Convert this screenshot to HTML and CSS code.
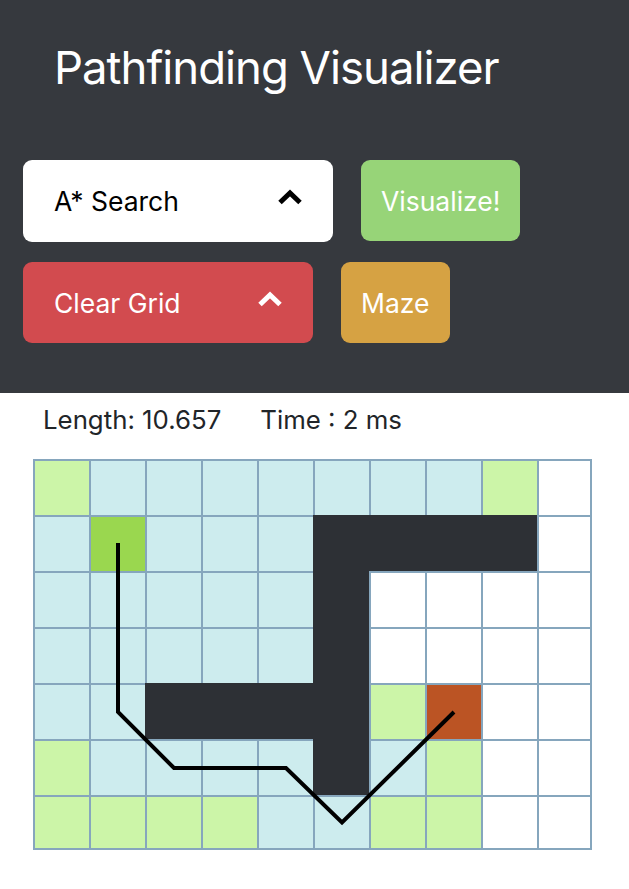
FILE: index.html
```html
<!DOCTYPE html>
<html lang="en">
<head>
<meta charset="utf-8">
<title>Pathfinding Visualizer</title>
<link rel="stylesheet" href="styles.css">
</head>
<body>
<header class="topbar">
  <h1 class="title">Pathfinding Visualizer</h1>
  <div class="controls">
    <div class="controls__row">
      <button class="dropdown dropdown--light" type="button">
        <span class="dropdown__label">A* Search</span>
        <svg class="chevron" viewBox="0 0 26 16" width="26" height="16" aria-hidden="true"><polyline points="3,13.5 13,4 23,13.5" /></svg>
      </button>
      <button class="btn btn--green" type="button">Visualize!</button>
    </div>
    <div class="controls__row">
      <button class="dropdown dropdown--red" type="button">
        <span class="dropdown__label">Clear Grid</span>
        <svg class="chevron" viewBox="0 0 26 16" width="26" height="16" aria-hidden="true"><polyline points="3,13.5 13,4 23,13.5" /></svg>
      </button>
      <button class="btn btn--orange" type="button">Maze</button>
    </div>
  </div>
</header>
<main class="content">
  <div class="stats">
    <span class="stats__item">Length: 10.657</span>
    <span class="stats__item">Time : 2 ms</span>
  </div>
  <div class="board">
    <div class="grid">
      <div class="cell cell--frontier"></div><div class="cell cell--visited"></div><div class="cell cell--visited"></div><div class="cell cell--visited"></div><div class="cell cell--visited"></div><div class="cell cell--visited"></div><div class="cell cell--visited"></div><div class="cell cell--visited"></div><div class="cell cell--frontier"></div><div class="cell"></div>
      <div class="cell cell--visited"></div><div class="cell cell--start"></div><div class="cell cell--visited"></div><div class="cell cell--visited"></div><div class="cell cell--visited"></div><div class="cell cell--wall"></div><div class="cell cell--wall"></div><div class="cell cell--wall"></div><div class="cell cell--wall"></div><div class="cell"></div>
      <div class="cell cell--visited"></div><div class="cell cell--visited"></div><div class="cell cell--visited"></div><div class="cell cell--visited"></div><div class="cell cell--visited"></div><div class="cell cell--wall"></div><div class="cell"></div><div class="cell"></div><div class="cell"></div><div class="cell"></div>
      <div class="cell cell--visited"></div><div class="cell cell--visited"></div><div class="cell cell--visited"></div><div class="cell cell--visited"></div><div class="cell cell--visited"></div><div class="cell cell--wall"></div><div class="cell"></div><div class="cell"></div><div class="cell"></div><div class="cell"></div>
      <div class="cell cell--visited"></div><div class="cell cell--visited"></div><div class="cell cell--wall"></div><div class="cell cell--wall"></div><div class="cell cell--wall"></div><div class="cell cell--wall"></div><div class="cell cell--frontier"></div><div class="cell cell--end"></div><div class="cell"></div><div class="cell"></div>
      <div class="cell cell--frontier"></div><div class="cell cell--visited"></div><div class="cell cell--visited"></div><div class="cell cell--visited"></div><div class="cell cell--visited"></div><div class="cell cell--wall"></div><div class="cell cell--visited"></div><div class="cell cell--frontier"></div><div class="cell"></div><div class="cell"></div>
      <div class="cell cell--frontier"></div><div class="cell cell--frontier"></div><div class="cell cell--frontier"></div><div class="cell cell--frontier"></div><div class="cell cell--visited"></div><div class="cell cell--visited"></div><div class="cell cell--frontier"></div><div class="cell cell--frontier"></div><div class="cell"></div><div class="cell"></div>
    </div>
    <svg class="path" viewBox="0 0 559 391" width="559" height="391" aria-hidden="true">
      <polyline points="85,84 85,253 141,309 253,309 309,363.5 421,253" />
    </svg>
  </div>
</main>
</body>
</html>
```
FILE: styles.css
```css
* { box-sizing: border-box; }

html, body {
  margin: 0;
  padding: 0;
  background: #ffffff;
}

body {
  font-family: "Inter", "Roboto", "Liberation Sans", sans-serif;
  color: #212529;
}

.topbar {
  background: #36393e;
  height: 393px;
  padding: 38px 0 0 23px;
}

.title {
  margin: 0 0 0 31px;
  font-size: 45.5px;
  font-weight: 400;
  line-height: 60px;
  color: #ffffff;
  letter-spacing: -1px;
}

.controls {
  margin-top: 62px;
  display: flex;
  flex-direction: column;
  gap: 20px;
}

.controls__row {
  display: flex;
  gap: 28px;
}

.dropdown,
.btn {
  border: none;
  border-radius: 9px;
  height: 81px;
  font-family: inherit;
  font-size: 26.5px;
  font-weight: 400;
  padding: 0;
  display: flex;
  align-items: center;
}

.dropdown {
  justify-content: space-between;
  padding: 0 30px 0 31px;
}

.dropdown--light {
  width: 310px;
  height: 82px;
  background: #ffffff;
  color: #000000;
}

.dropdown--red {
  width: 290px;
  background: #d24b4f;
  color: #ffffff;
}

.chevron {
  margin-top: -8px;
  fill: none;
  stroke: currentColor;
  stroke-width: 5;
  stroke-linejoin: miter;
}

.btn {
  padding: 0 20px;
  color: #ffffff;
}

.btn--green {
  background: #97d478;
}

.btn--orange {
  background: #d6a243;
}

.content {
  padding: 0 0 0 33px;
}

.stats {
  display: flex;
  gap: 39px;
  padding: 12px 0 0 10px;
  height: 66px;
  font-size: 25.8px;
  line-height: 30px;
  color: #212529;
}

.board {
  position: relative;
  width: 559px;
  height: 391px;
}

.grid {
  display: grid;
  grid-template-columns: repeat(9, 56px) 53px;
  grid-template-rows: repeat(6, 56px) 53px;
  border-right: 2px solid #86a6bd;
  border-bottom: 2px solid #86a6bd;
  width: 559px;
  height: 391px;
}

.cell {
  background: #ffffff;
  border-top: 2px solid #86a6bd;
  border-left: 2px solid #86a6bd;
}

.cell--visited { background: #cdecee; }
.cell--frontier { background: #ccf5a8; }
.cell--start { background: #9ad74f; }
.cell--end { background: #bb5424; }
.cell--wall { background: #2d3035; border-color: #2d3035; }

.path {
  position: absolute;
  left: 0;
  top: 0;
  pointer-events: none;
}

.path polyline {
  fill: none;
  stroke: #000000;
  stroke-width: 4;
  stroke-linejoin: miter;
}
```
